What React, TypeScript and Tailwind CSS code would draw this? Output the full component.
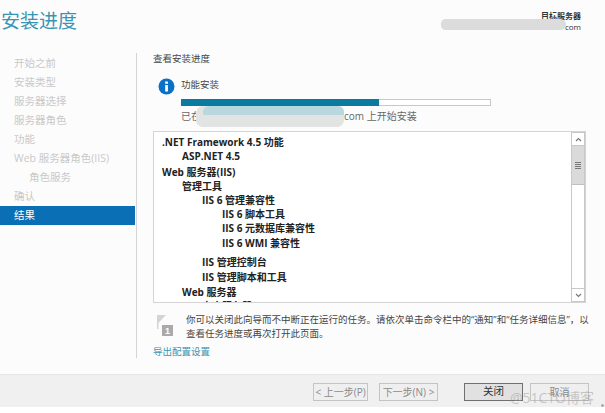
const font = { fontFamily: '"Open Sans", "Noto Sans CJK SC", sans-serif' };

const steps = [
  { label: "开始之前" },
  { label: "安装类型" },
  { label: "服务器选择" },
  { label: "服务器角色" },
  { label: "功能" },
  { label: "Web 服务器角色(IIS)" },
  { label: "角色服务", sub: true },
  { label: "确认" },
];

const tree = [
  { text: ".NET Framework 4.5 功能", pl: "pl-[9px]", h: "h-[14px]" },
  { text: "ASP.NET 4.5", pl: "pl-[29px]", h: "h-[16px]" },
  { text: "Web 服务器(IIS)", pl: "pl-[9px]", h: "h-[14px]" },
  { text: "管理工具", pl: "pl-[29px]", h: "h-[14px]" },
  { text: "IIS 6 管理兼容性", pl: "pl-[49px]", h: "h-[14px]" },
  { text: "IIS 6 脚本工具", pl: "pl-[69px]", h: "h-[14px]" },
  { text: "IIS 6 元数据库兼容性", pl: "pl-[69px]", h: "h-[15px]" },
  { text: "IIS 6 WMI 兼容性", pl: "pl-[69px]", h: "h-[19px]" },
  { text: "IIS 管理控制台", pl: "pl-[49px]", h: "h-[15px]" },
  { text: "IIS 管理脚本和工具", pl: "pl-[49px]", h: "h-[15px]" },
  { text: "Web 服务器", pl: "pl-[29px]", h: "h-[14px]" },
  { text: "安全服务器", pl: "pl-[49px]", h: "h-[14px]" },
];

function WizardButton({ label, primary, narrow }: { label: string; primary?: boolean; narrow?: boolean }) {
  return (
    <div
      className={
        primary
          ? "flex h-[18px] w-[59px] items-center justify-center border border-[#707070] bg-[#e1e1e1] text-[10.5px] text-[#333]"
          : `flex h-[18px] ${narrow ? "w-[55px]" : "w-[59px]"} items-center justify-center border border-[#c4c4c4] bg-[#efefef] text-[10px] whitespace-nowrap text-[#8a8a8a]`
      }
    >
      {label}
    </div>
  );
}

export default function App() {
  return (
    <div className="relative h-[413px] w-[605px] overflow-hidden bg-white" style={font}>
      <div className="flex h-[407px] flex-col bg-[#fcfcfc]">
        <header className="flex h-[53px] shrink-0 justify-between pr-[24px]">
          <h1 className="pl-px pt-[7px] text-[19px] leading-[28px] font-normal text-[#3a94b3]">安装进度</h1>
          <div className="pt-[10px] text-right text-[8px] leading-[11px] text-[#333]">
            <div className="font-bold">目标服务器</div>
            <div>com</div>
          </div>
        </header>

        <div className="flex min-h-0 flex-1">
          <nav className="h-[305px] w-[137px] shrink-0 border-r border-[#d4d4d4] pt-[1px]">
            {steps.map((s) => (
              <div
                key={s.label}
                className={`flex h-[19px] items-center text-[10.5px] text-[#c9c9c9] ${s.sub ? "pl-[29px]" : "pl-[14px]"}`}
              >
                {s.label}
              </div>
            ))}
            <div className="flex h-[19px] w-[135px] items-center bg-[#0a6fb4] pl-[14px] text-[10.5px] text-white">结果</div>
          </nav>

          <main className="min-w-0 flex-1 pl-[16px] pr-[19px]">
            <div className="h-[25px] text-[9.5px] leading-[12px] text-[#444]">查看安装进度</div>

            <div className="flex gap-[6px] pl-[5px]">
              <svg width="17" height="17" viewBox="0 0 17 17" className="shrink-0">
                <circle cx="8.5" cy="8.5" r="8" fill="#0a70c8" />
                <rect x="7.2" y="7" width="2.7" height="6.5" fill="#fff" />
                <rect x="7.2" y="3.5" width="2.7" height="2.3" fill="#fff" />
              </svg>
              <div className="w-[310px]">
                <div className="h-[14px] pt-[1px] text-[9.5px] leading-[12px] text-[#444]">功能安装</div>
                <div className="mt-[7px] h-[7px] border border-[#c8c8c8] bg-white">
                  <div className="-mx-px -my-px h-[7px] w-[198px] bg-[#0b7a9e]" />
                </div>
                <div className="mt-[2px] text-[10px] leading-[16px] whitespace-nowrap text-[#666]">
                  已在<span className="inline-block w-[143px]" />com 上开始安装
                </div>
              </div>
            </div>

            <div className="mt-[7px] flex h-[172px] w-[433px] overflow-hidden border border-[#d4d4d4] bg-white">
              <div className="-ml-px min-w-0 flex-1 overflow-hidden pt-[3px] text-[10px] font-bold text-[#222]">
                {tree.map((r) => (
                  <div key={r.text} className={`${r.pl} ${r.h} leading-[14px] whitespace-nowrap`}>
                    {r.text}
                  </div>
                ))}
              </div>
              <div className="flex w-[14px] shrink-0 flex-col border border-[#c8c8c8] bg-white">
                <div className="flex h-[13px] items-center justify-center border-b border-[#c8c8c8]">
                  <svg width="7" height="5" viewBox="0 0 7 5">
                    <path d="M1 4 L3.5 1.5 L6 4" fill="none" stroke="#777" strokeWidth="1.2" />
                  </svg>
                </div>
                <div className="flex h-[39px] flex-col items-center justify-center gap-px border-b border-[#c0c0c0] bg-[#dadada]">
                  <div className="h-px w-[6px] bg-[#777]" />
                  <div className="h-px w-[6px] bg-[#777]" />
                  <div className="h-px w-[6px] bg-[#777]" />
                  <div className="h-px w-[6px] bg-[#777]" />
                </div>
                <div className="flex-1" />
                <div className="flex h-[13px] items-center justify-center border-t border-[#c8c8c8]">
                  <svg width="7" height="5" viewBox="0 0 7 5">
                    <path d="M1 1 L3.5 3.5 L6 1" fill="none" stroke="#777" strokeWidth="1.2" />
                  </svg>
                </div>
              </div>
            </div>

            <div className="mt-[10px] flex gap-[12px] pl-[3px]">
              <svg width="18" height="22" viewBox="0 0 18 22" className="mt-[2px] shrink-0">
                <path d="M1 0 L1 14 L2.5 14 L2.5 8 L10 0 Z" fill="#d4d4d4" />
                <rect x="6" y="10" width="11" height="11" fill="#aaaaaa" />
                <text x="11.5" y="19" textAnchor="middle" fontSize="9" fontWeight="700" fill="#fff" fontFamily="Liberation Sans, sans-serif">1</text>
              </svg>
              <p className="w-[408px] shrink-0 text-[9.5px] leading-[14px] whitespace-nowrap text-[#444]">
                你可以关闭此向导而不中断正在运行的任务。请依次单击命令栏中的“通知”和“任务详细信息”，以
                <br />
                查看任务进度或再次打开此页面。
              </p>
            </div>

            <div className="mt-[4px] text-[9.5px] leading-[14px] text-[#3a94b3]">导出配置设置</div>
          </main>
        </div>

        <footer className="flex h-[33px] shrink-0 items-center justify-end gap-[7px] border-t border-[#e6e6e6] bg-[#f0f0f0] pt-[2px] pr-[16px]">
          <div className="mr-[19px] flex gap-[11px]">
            <WizardButton label="< 上一步(P)" narrow />
            <WizardButton label="下一步(N) >" />
          </div>
          <WizardButton label="关闭" primary />
          <WizardButton label="取消" />
        </footer>
      </div>

      {/* redaction smears and watermark over the screenshot */}
      <div className="absolute top-[19px] left-[441px] h-[11px] w-[125px] rounded-l-[5px] rounded-r-[6px] bg-[#dcdcdc]" />
      <div className="absolute top-[106px] left-[196px] h-[21px] w-[148px] rounded-[7px] bg-[#e2e4e4]" />
      <div className="absolute top-[106px] left-[203px] h-[9px] w-[141px] rounded-t-[6px] bg-[#b9d7df]" />
      <div className="absolute top-[389px] left-[510px] text-[14px] leading-[18px] text-[#9a9a9a]/50">@51CTO博客</div>
      <div className="absolute top-[404px] left-[601px] h-[3px] w-[3px] rounded-full bg-[#aaa]" />
    </div>
  );
}
